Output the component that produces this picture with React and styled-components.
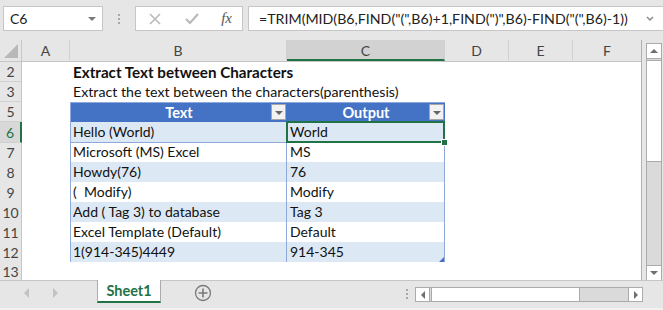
import React from "react";
import styled, { createGlobalStyle } from "styled-components";

const GlobalStyle = createGlobalStyle`
  body {
    margin: 0;
    background: #e6e6e6;
    font-family: "Lato", "Liberation Sans", sans-serif;
  }
`;

const COLS = "22px 48px 217px 158px 64px 64px 68px";
const GREEN = "#217346";

const rows = [
  { n: 2, kind: "title", b: "Extract Text between Characters" },
  { n: 3, kind: "note", b: "Extract the text between the characters(parenthesis)" },
  { n: 5, kind: "head", b: "Text", c: "Output" },
  { n: 6, kind: "data", b: "Hello (World)", c: "World", band: true, sel: true },
  { n: 7, kind: "data", b: "Microsoft (MS) Excel", c: "MS" },
  { n: 8, kind: "data", b: "Howdy(76)", c: "76", band: true },
  { n: 9, kind: "data", b: "(  Modify)", c: "Modify" },
  { n: 10, kind: "data", b: "Add ( Tag 3) to database", c: "Tag 3", band: true },
  { n: 11, kind: "data", b: "Excel Template (Default)", c: "Default" },
  { n: 12, kind: "data", b: "1(914-345)4449", c: "914-345", band: true, last: true },
  { n: 13, kind: "empty" },
];

function App() {
  return (
    <Wrapper>
      <GlobalStyle />
      <FormulaBar>
        <NameBox>
          C6
          <SmallTri />
        </NameBox>
        <Dots>
          <i />
          <i />
          <i />
        </Dots>
        <FxBox>
          <svg width="14" height="14" viewBox="0 0 14 14">
            <path d="M2 2 L12 12 M12 2 L2 12" stroke="#b9b9b9" strokeWidth="1.6" />
          </svg>
          <svg width="16" height="14" viewBox="0 0 16 14">
            <path d="M2 7 L6 11 L14 2" stroke="#b9b9b9" strokeWidth="2.2" fill="none" />
          </svg>
          <Fx>fx</Fx>
        </FxBox>
        <FormulaInput>
          =TRIM(MID(B6,FIND("(",B6)+1,FIND(")",B6)-FIND("(",B6)-1))
          <svg width="10" height="8" viewBox="0 0 10 8">
            <path d="M2 2 L5 5 L8 2" stroke="#8a8a8a" strokeWidth="1.5" fill="none" />
          </svg>
        </FormulaInput>
      </FormulaBar>

      <Body>
        <Sheet>
          <Row $head>
            <Corner>
              <svg width="14" height="14" viewBox="0 0 14 14">
                <path d="M14 0 L14 14 L0 14 Z" fill="#b8b8b8" />
              </svg>
            </Corner>
            <ColHead>A</ColHead>
            <ColHead>B</ColHead>
            <ColHead $sel>C</ColHead>
            <ColHead>D</ColHead>
            <ColHead>E</ColHead>
            <ColHead $last>F</ColHead>
          </Row>
          {rows.map((r) => (
            <Row key={r.n} $top={r.sel}>
              <RowHead $sel={r.sel}>{r.n}</RowHead>
              <Cell />
              {r.kind === "title" && <FreeText $bold>{r.b}</FreeText>}
              {r.kind === "note" && <FreeText>{r.b}</FreeText>}
              {(r.kind === "title" || r.kind === "note") && <Cell />}
              {r.kind === "empty" && (
                <>
                  <Cell />
                  <Cell />
                </>
              )}
              {r.kind === "head" && (
                <>
                  <HeadCell $first>
                    {r.b}
                    <FilterBtn />
                  </HeadCell>
                  <HeadCell>
                    {r.c}
                    <FilterBtn />
                  </HeadCell>
                </>
              )}
              {r.kind === "data" && (
                <>
                  <TCell $first $band={r.band}>
                    {r.b}
                  </TCell>
                  <TCell $band={r.band} $sel={r.sel} $last={r.last}>
                    {r.c}
                  </TCell>
                </>
              )}
              <Cell />
              <Cell />
              <Cell />
            </Row>
          ))}
        </Sheet>
        <VScroll>
          <ScrollBtn>
            <Tri $dir="up" />
          </ScrollBtn>
          <VThumb />
          <Track />
          <ScrollBtn>
            <Tri $dir="down" />
          </ScrollBtn>
        </VScroll>
      </Body>

      <TabBar>
        <NavArrows>
          <Tri $dir="left" $light />
          <Tri $dir="right" $light />
        </NavArrows>
        <SheetTab>Sheet1</SheetTab>
        <AddSheet>
          <svg width="18" height="18" viewBox="0 0 18 18">
            <circle cx="9" cy="9" r="7.5" stroke="#7a7a7a" strokeWidth="1.3" fill="none" />
            <path d="M9 4.5 V13.5 M4.5 9 H13.5" stroke="#7a7a7a" strokeWidth="1.6" />
          </svg>
        </AddSheet>
        <Spacer />
        <Dots $tab>
          <i />
          <i />
          <i />
        </Dots>
        <HScroll>
          <ScrollBtn $h>
            <Tri $dir="left" />
          </ScrollBtn>
          <HThumb />
          <Track />
          <ScrollBtn $h>
            <Tri $dir="right" />
          </ScrollBtn>
        </HScroll>
      </TabBar>
    </Wrapper>
  );
}

const Wrapper = styled.div`
  width: 663px;
  height: 310px;
  display: flex;
  flex-direction: column;
  background: #e6e6e6;
  overflow: hidden;
`;

const FormulaBar = styled.div`
  height: 40px;
  display: flex;
  align-items: flex-start;
  padding-top: 6px;
  box-sizing: border-box;
`;

const NameBox = styled.div`
  margin-left: 3px;
  width: 100px;
  height: 25px;
  box-sizing: border-box;
  background: #fff;
  border: 1px solid #c6c6c6;
  display: flex;
  align-items: center;
  justify-content: space-between;
  padding: 0 6px 0 6px;
  font-size: 14px;
  color: #222;
`;

const SmallTri = styled.span`
  width: 0;
  height: 0;
  border-left: 4px solid transparent;
  border-right: 4px solid transparent;
  border-top: 4px solid #7a7a7a;
`;

const Dots = styled.div`
  width: ${(p) => (p.$tab ? "16px" : "32px")};
  height: 25px;
  display: flex;
  flex-direction: column;
  align-items: center;
  justify-content: center;
  gap: 2px;
  i {
    width: 2px;
    height: 2px;
    background: #a8a8a8;
  }
`;

const FxBox = styled.div`
  width: 108px;
  height: 25px;
  box-sizing: border-box;
  background: #fff;
  border: 1px solid #c6c6c6;
  display: flex;
  align-items: center;
  justify-content: space-between;
  padding: 0 10px 0 12px;
`;

const Fx = styled.span`
  font-family: "Liberation Serif", serif;
  font-style: italic;
  font-size: 15px;
  color: #555;
`;

const FormulaInput = styled.div`
  margin-left: 5px;
  flex: 1;
  height: 25px;
  box-sizing: border-box;
  background: #fff;
  border: 1px solid #c6c6c6;
  border-right: none;
  display: flex;
  align-items: center;
  justify-content: space-between;
  padding: 0 8px 0 10px;
  font-size: 14.2px;
  color: #222;
  white-space: pre;
`;

const Body = styled.div`
  height: 240px;
  display: flex;
`;

const Sheet = styled.div`
  width: 642px;
  height: 240px;
  overflow: hidden;
  background: #fff;
  border-right: 1px solid #b0b0b0;
  box-sizing: border-box;
`;

const Row = styled.div`
  display: grid;
  grid-template-columns: ${COLS};
  height: ${(p) => (p.$head ? "22px" : "20px")};
  background: ${(p) => (p.$head ? "#e6e6e6" : "#fff")};
  border-bottom: ${(p) => (p.$head ? "1px solid #c6c6c6" : "none")};
  box-sizing: border-box;
  font-size: 14px;
  position: relative;
  z-index: ${(p) => (p.$top ? 2 : "auto")};
`;

const Corner = styled.div`
  display: flex;
  align-items: flex-end;
  justify-content: flex-end;
  padding: 0 3px 3px 0;
  border-right: 1px solid #c6c6c6;
`;

const ColHead = styled.div`
  display: flex;
  align-items: center;
  justify-content: center;
  color: #444;
  font-size: 14px;
  background: ${(p) => (p.$sel ? "#d2d2d2" : "#e6e6e6")};
  border-right: ${(p) => (p.$last ? "none" : "1px solid #d0d0d0")};
  border-bottom: 2px solid ${(p) => (p.$sel ? GREEN : "transparent")};
  box-sizing: border-box;
  padding-top: 2px;
`;

const RowHead = styled.div`
  display: flex;
  align-items: center;
  justify-content: center;
  color: ${(p) => (p.$sel ? GREEN : "#444")};
  background: ${(p) => (p.$sel ? "#d8d8d8" : "#e6e6e6")};
  border-bottom: 1px solid #d0d0d0;
  border-right: ${(p) => (p.$sel ? `2px solid ${GREEN}` : "1px solid #c6c6c6")};
  box-sizing: border-box;
  font-size: 14px;
`;

const Cell = styled.div``;

const FreeText = styled.div`
  padding-left: 3px;
  white-space: nowrap;
  overflow: visible;
  line-height: 20px;
  font-size: ${(p) => (p.$bold ? "15.2px" : "14.2px")};
  font-weight: ${(p) => (p.$bold ? 700 : 400)};
  color: #111;
  position: relative;
  z-index: 1;
`;

const HeadCell = styled.div`
  position: relative;
  background: #4472c4;
  color: #fff;
  font-weight: 700;
  font-size: 14.5px;
  text-align: center;
  line-height: 19px;
  border-top: 1px solid #8ea9db;
  border-left: ${(p) => (p.$first ? "1px solid #8ea9db" : "none")};
  box-sizing: border-box;
`;

const FilterBtn = styled.span`
  position: absolute;
  right: 1px;
  top: 1px;
  width: 15px;
  height: 16px;
  box-sizing: border-box;
  background: #f2f2f2;
  border: 1px solid #a6a6a6;
  &::after {
    content: "";
    position: absolute;
    left: 3px;
    top: 6px;
    border-left: 4px solid transparent;
    border-right: 4px solid transparent;
    border-top: 4px solid #666;
  }
`;

const TCell = styled.div`
  position: relative;
  background: ${(p) => (p.$band ? "#dde8f5" : "#fff")};
  border-bottom: 1px solid #8ea9db;
  border-right: 1px solid #8ea9db;
  border-left: ${(p) => (p.$first ? "1px solid #8ea9db" : "none")};
  box-sizing: border-box;
  padding-left: ${(p) => (p.$first ? "2px" : "3px")};
  line-height: 20px;
  white-space: pre;
  color: #111;
  ${(p) =>
    p.$sel &&
    `
    &::before {
      content: "";
      position: absolute;
      left: -1px;
      top: -1px;
      right: -1px;
      bottom: -1px;
      border: 2px solid ${GREEN};
    }
    &::after {
      content: "";
      position: absolute;
      right: -4px;
      bottom: -4px;
      width: 5px;
      height: 5px;
      background: ${GREEN};
      border: 1px solid #fff;
    }
  `}
  ${(p) =>
    p.$last &&
    `
    &::after {
      content: "";
      position: absolute;
      right: 0;
      bottom: 0;
      border-left: 5px solid transparent;
      border-bottom: 5px solid #4472c4;
    }
  `}
`;

const VScroll = styled.div`
  margin: 3px 0 0 4px;
  width: 16px;
  display: flex;
  flex-direction: column;
  border: 1px solid #ababab;
  border-bottom: none;
  box-sizing: border-box;
  background: #dadada;
`;

const ScrollBtn = styled.div`
  ${(p) => (p.$h ? "width: 14px; height: 100%;" : "height: 15px;")}
  flex-shrink: 0;
  background: #fff;
  display: flex;
  align-items: center;
  justify-content: center;
  box-sizing: border-box;
  ${(p) => (p.$h ? "" : "border-bottom: 1px solid #ababab;")}
  &:last-child {
    ${(p) => (p.$h ? "border-left: 1px solid #ababab;" : "border-top: 1px solid #ababab; border-bottom: none;")}
  }
  &:first-child {
    ${(p) => (p.$h ? "border-right: 1px solid #ababab;" : "")}
  }
`;

const VThumb = styled.div`
  height: 100px;
  flex-shrink: 0;
  margin: 1px 0;
  background: #fff;
  border-top: 1px solid #ababab;
  border-bottom: 1px solid #ababab;
`;

const Track = styled.div`
  flex: 1;
  background: #dadada;
`;

const Tri = styled.span`
  width: 0;
  height: 0;
  ${(p) => {
    const c = p.$light ? "#c2c2c2" : "#6f6f6f";
    const s = p.$light ? 5 : 4;
    if (p.$dir === "up")
      return `border-left: ${s}px solid transparent; border-right: ${s}px solid transparent; border-bottom: ${s}px solid ${c};`;
    if (p.$dir === "down")
      return `border-left: ${s}px solid transparent; border-right: ${s}px solid transparent; border-top: ${s}px solid ${c};`;
    if (p.$dir === "left")
      return `border-top: ${s}px solid transparent; border-bottom: ${s}px solid transparent; border-right: ${s}px solid ${c};`;
    return `border-top: ${s}px solid transparent; border-bottom: ${s}px solid transparent; border-left: ${s}px solid ${c};`;
  }}
`;

const TabBar = styled.div`
  height: 30px;
  display: flex;
  align-items: flex-start;
  border-top: 1px solid #c6c6c6;
  box-sizing: border-box;
  border-bottom: 2px solid #f2f2f2;
`;

const NavArrows = styled.div`
  width: 97px;
  height: 23px;
  display: flex;
  align-items: center;
  gap: 24px;
  padding-left: 24px;
  box-sizing: border-box;
`;

const SheetTab = styled.div`
  width: 64px;
  height: 23px;
  margin-top: -1px;
  box-sizing: border-box;
  background: #fff;
  border-left: 1px solid #ababab;
  border-right: 1px solid #ababab;
  border-bottom: 2px solid ${GREEN};
  color: ${GREEN};
  font-weight: 700;
  font-size: 14.5px;
  display: flex;
  align-items: center;
  justify-content: center;
`;

const AddSheet = styled.div`
  margin-left: 33px;
  height: 23px;
  display: flex;
  align-items: center;
`;

const Spacer = styled.div`
  flex: 1;
`;

const HScroll = styled.div`
  margin: 6px 20px 0 0;
  width: 228px;
  height: 15px;
  display: flex;
  border: 1px solid #ababab;
  box-sizing: border-box;
  background: #dadada;
`;

const HThumb = styled.div`
  width: 147px;
  flex-shrink: 0;
  margin: 0 1px;
  background: #fff;
  border-left: 1px solid #ababab;
  border-right: 1px solid #ababab;
`;

export default App;
